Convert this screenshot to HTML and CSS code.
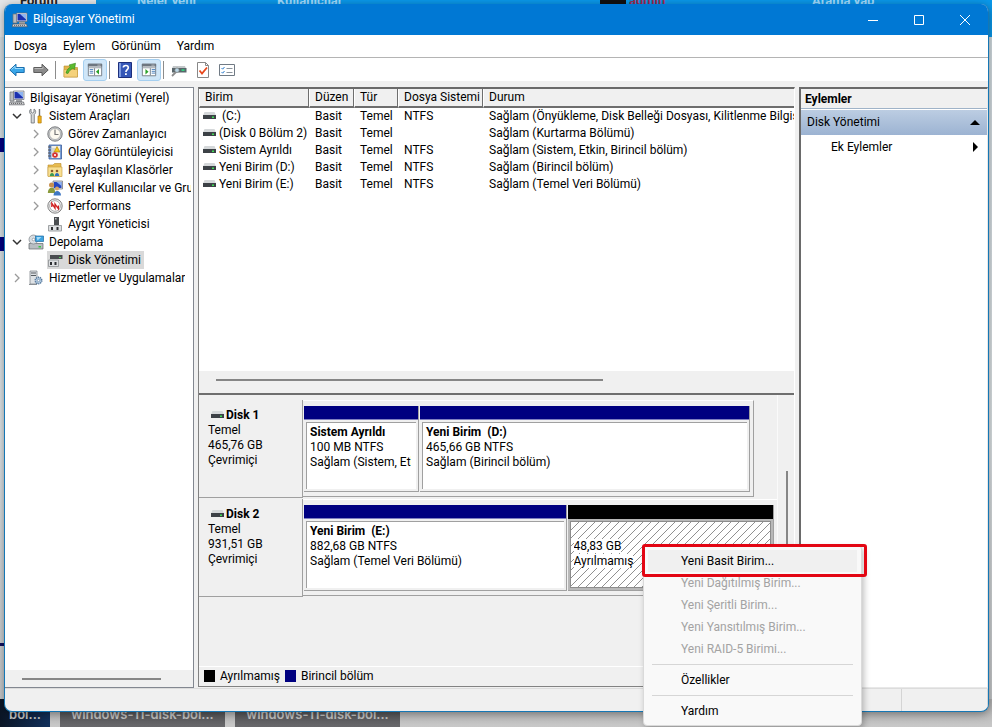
FILE: index.html
```html
<!DOCTYPE html>
<html lang="tr">
<head>
  <meta charset="utf-8">
  <title>Bilgisayar Yönetimi</title>
  <meta name="viewport" content="width=device-width, initial-scale=1">
  <link rel="stylesheet" href="styles.css">
</head>
<body>

<!-- icon sprite -->
<svg class="sprite" aria-hidden="true">
  <symbol id="i-computer" viewBox="0 0 16 16">
    <path d="M1 2h4v9H1z" fill="#b9bcc0" stroke="#6f7377" stroke-width=".7"/>
    <path d="M4.500 1h10.500v8.500H4.500z" fill="#e4e6ea" stroke="#6b6f78" stroke-width=".7"/>
    <path d="M5.500 2h8.500v6.500H5.500z" fill="#1a2fb0"/>
    <path d="M8 2h6v5.500z" fill="#8fb4f0"/>
    <path d="M7 10h6v2H7z" fill="#9da0a4"/>
    <path d="M1 12h13.500l.8 2.800H0z" fill="#d8d9db" stroke="#55585c" stroke-width=".7"/>
    <path d="M2 13.400h11" stroke="#444" stroke-width=".8" stroke-dasharray="1.200 .8"/>
  </symbol>
  <symbol id="i-back" viewBox="0 0 16 14">
    <path d="M.8 7 7 1.200V4.500h8.200v5H7v3.300z" fill="#3aa6e8" stroke="#1c6fae" stroke-width="1"/>
    <path d="M2.500 6.500 6 3.300v2.200h8" fill="none" stroke="#9bdcff"/>
  </symbol>
  <symbol id="i-forward" viewBox="0 0 16 14">
    <path d="M15.200 7 9 1.200V4.500H.8v5H9v3.300z" fill="#8b8b8b" stroke="#5c5c5c" stroke-width="1"/>
    <path d="M1.500 5.500H10V3.500" fill="none" stroke="#b9b9b9"/>
  </symbol>
  <symbol id="i-up" viewBox="0 0 16 16">
    <path d="M1 4h5l1.500 1.500H14.500V15H1z" fill="#e2b54c" stroke="#b98a2a" stroke-width=".6"/>
    <path d="M1 7.500h13.500V15H1z" fill="#f5d27c" stroke="#c79a3a" stroke-width=".6"/>
    <path d="M3 11C3.500 8 5.500 6 7.500 5L6 3l6.500-1.800L11.500 7.500 9.900 6.200C8 7.200 6 9 5 11.500z" fill="#5dbb2f" stroke="#2f8a1a" stroke-width=".6"/>
  </symbol>
  <symbol id="i-tree" viewBox="0 0 18 16">
    <path d="M1.500 1.500h15v13h-15z" fill="#fff" stroke="#6d7680"/>
    <path d="M1 1h16v3H1z" fill="#6d7680"/>
    <path d="M12 2.500h1M14 2.500h1" stroke="#fff"/>
    <path d="M2 5.500h14" stroke="#8a939c"/>
    <path d="M8.500 6v8" stroke="#6d7680"/>
    <path d="M3 7.500h4M3 9.500h4M3 11.500h4" stroke="#3f79b8"/>
    <path d="M13.500 7v6L10 10z" fill="#2ba12b"/>
  </symbol>
  <symbol id="i-pane" viewBox="0 0 18 16">
    <path d="M1.500 1.500h15v13h-15z" fill="#fff" stroke="#6d7680"/>
    <path d="M1 1h16v3H1z" fill="#6d7680"/>
    <path d="M12 2.500h1M14 2.500h1" stroke="#fff"/>
    <path d="M2 5.500h14" stroke="#8a939c"/>
    <path d="M10.500 6v8" stroke="#6d7680"/>
    <path d="M12 7.500h4M12 9.500h4M12 11.500h4" stroke="#3f79b8"/>
    <path d="M5 7v6L8.500 10z" fill="#2ba12b"/>
  </symbol>
  <symbol id="i-help" viewBox="0 0 14 16">
    <path d="M.5.5h13v15H.5z" fill="#3557b8" stroke="#1d2f7c"/>
    <path d="M1 1h2v14H1z" fill="#7d9ae0"/>
    <path d="M5.300 5.500C5.300 2.800 10.300 2.800 10.300 5.700 10.300 7.600 7.900 7.700 7.900 10" fill="none" stroke="#fff" stroke-width="1.600"/>
    <path d="M7 11.300h1.800V13H7z" fill="#fff"/>
  </symbol>
  <symbol id="i-rescan" viewBox="0 0 16 14">
    <path d="M2 3h12l1 2.500H1z" fill="#c3c7c9"/>
    <path d="M1 5h14.500v4.500H1z" fill="#59666b"/>
    <path d="M10.500 6.200h3v1.800h-3z" fill="#35d080"/>
    <path d="M1 13l4.500-4.500" stroke="#8c8c8c" stroke-width="1.800"/>
    <circle cx="6" cy="7.200" r="2.200" fill="#b9d6e6" stroke="#777" stroke-width=".6"/>
  </symbol>
  <symbol id="i-check" viewBox="0 0 14 16">
    <path d="M1.500.5h8l3 3v12h-11z" fill="#fff" stroke="#888"/>
    <path d="M9.500.5v3h3" fill="none" stroke="#888"/>
    <path d="M3.500 8.500 6 11.500 11 5.500" fill="none" stroke="#e8481c" stroke-width="1.800"/>
  </symbol>
  <symbol id="i-list" viewBox="0 0 16 14">
    <path d="M.5 1.500h15v11H.5z" fill="#fff" stroke="#707a84"/>
    <path d="M1 1.500h14" stroke="#707a84"/>
    <path d="M2.500 5 3.700 6.200 5.500 4M2.500 9 3.700 10.200 5.500 8" fill="none" stroke="#2f7fd0"/>
    <path d="M7.500 5.500h6M7.500 9.500h6" stroke="#8a939c"/>
  </symbol>
  <symbol id="i-tools" viewBox="0 0 16 16">
    <path d="M3 1v3l1.500 1L6 4V1c2 1 2.300 4 .3 5.500V15H3.200V6.500C.8 5 1.200 2 3 1z" fill="#d5d8da" stroke="#6b6f73" stroke-width=".8"/>
    <path d="M11.500 1v7" stroke="#777" stroke-width="1.400"/>
    <path d="M10 8h3.200v7H10z" fill="#f2b21c" stroke="#b37c08" stroke-width=".7"/>
  </symbol>
  <symbol id="i-clock" viewBox="0 0 16 16">
    <circle cx="8" cy="8" r="7.200" fill="#c9cbce" stroke="#6d6f72" stroke-width=".9"/>
    <circle cx="8" cy="8" r="5.500" fill="#fdfaf0" stroke="#96989b" stroke-width=".6"/>
    <path d="M8 3.500V8.500h3.500" fill="none" stroke="#777" stroke-width="1.200"/>
  </symbol>
  <symbol id="i-event" viewBox="0 0 16 16">
    <path d="M2 1h12.500v14H2z" fill="#7aa0d8" stroke="#3b5d9c" stroke-width=".8"/>
    <path d="M4.500 2h8.500v12H4.500z" fill="#f3efe4"/>
    <path d="M5 5h3M5 7h2M5 9h2" stroke="#9aa" stroke-width=".7"/>
    <path d="M1 3h3M1 6h3M1 9h3M1 12h3" stroke="#555"/>
    <path d="M10 2.500 13 8H7z" fill="#f7c51e" stroke="#a67d00" stroke-width=".6"/>
    <circle cx="8" cy="11" r="2.800" fill="#d42d2d"/>
    <path d="M6.900 9.900l2.200 2.200M9.100 9.900l-2.200 2.200" stroke="#fff" stroke-width=".8"/>
  </symbol>
  <symbol id="i-shared" viewBox="0 0 16 16">
    <path d="M1 3h5l1.500-1.500H14V14H1z" fill="#e8bc50" stroke="#b88a2a" stroke-width=".6"/>
    <path d="M1 5h14v9.500H1z" fill="#f8df92" stroke="#c79a3a" stroke-width=".6"/>
    <circle cx="5" cy="9" r="1.300" fill="#8a5a2b"/><path d="M2.800 14c0-4 4.400-4 4.400 0z" fill="#3d9a52"/>
    <circle cx="10" cy="9" r="1.300" fill="#8a5a2b"/><path d="M7.800 14c0-4 4.400-4 4.400 0z" fill="#2f6fc0"/>
  </symbol>
  <symbol id="i-users" viewBox="0 0 16 16">
    <path d="M6 1h9.500v8H6z" fill="#d8dbe0" stroke="#6b6f78" stroke-width=".7"/>
    <path d="M7 2h7.500v6H7z" fill="#2446c0"/>
    <path d="M9.500 2h5v4z" fill="#8fb4f0"/>
    <circle cx="4.500" cy="5" r="2.500" fill="#c98f4e"/><path d="M.8 13c0-7 7.500-7 7.500 0z" fill="#8a9a3b"/>
    <circle cx="10" cy="8.500" r="2" fill="#d9a566"/><path d="M6.500 15.500c0-6 7.500-6 7.500 0z" fill="#3f78c4"/>
  </symbol>
  <symbol id="i-perf" viewBox="0 0 16 16">
    <circle cx="8" cy="8" r="7.200" fill="#ececec" stroke="#777" stroke-width=".9"/>
    <circle cx="8" cy="8" r="5.300" fill="#fff" stroke="#8d8d8d" stroke-width=".7"/>
    <path d="M4.800 9V5.200L8 10.200V6l3.400 4.800V7.500" fill="none" stroke="#cf1f1f" stroke-width="1.300"/>
  </symbol>
  <symbol id="i-device" viewBox="0 0 16 16">
    <path d="M7 1h5v8H7z" fill="#4a4d50"/>
    <path d="M8 2h1.500v1.500H8z" fill="#c2c5c8"/>
    <path d="M1.500 9.500h13v5.500h-13z" fill="#dddfe1" stroke="#8c8f92" stroke-width=".8"/>
    <path d="M4 11h2v3H4zM9.500 11h2v3h-2z" fill="#2b2d30"/>
  </symbol>
  <symbol id="i-storage" viewBox="0 0 16 16">
    <path d="M1 9.500h14V15H1z" fill="#b9bec2" stroke="#63686c" stroke-width=".7"/>
    <path d="M10.500 12h2.500v1.500h-2.500z" fill="#35c943"/>
    <circle cx="5.500" cy="5.500" r="4.500" fill="#d9dee2" stroke="#7c8388" stroke-width=".7"/>
    <circle cx="5.500" cy="5.500" r="1.300" fill="#fff" stroke="#7c8388" stroke-width=".6"/>
    <path d="M7.500 2h8v5.500h-8z" fill="#3da3e0" stroke="#1f6ca3" stroke-width=".7"/>
    <path d="M8.500 3h5l-4 3.500z" fill="#a7dcf8"/>
  </symbol>
  <symbol id="i-disk" viewBox="0 0 16 16">
    <path d="M3 3h12.500v4H3z" fill="#4a4d50"/>
    <path d="M12 5h2v1h-2z" fill="#58d05e"/>
    <path d="M1.500 8h10v6.500h-10z" fill="#dddfe1" stroke="#8c8f92" stroke-width=".8"/>
    <path d="M3 10h2v3H3zM7.500 10h2v3h-2z" fill="#2b2d30"/>
  </symbol>
  <symbol id="i-services" viewBox="0 0 16 16">
    <path d="M2 1h7v13H2z" fill="#dfe2e5" stroke="#777c81" stroke-width=".7"/>
    <path d="M3 3h5M3 5.500h5" stroke="#565b60"/>
    <path d="M1 14.500h8" stroke="#8b9095"/>
    <circle cx="10.500" cy="10.500" r="3.200" fill="#b9d0e6" stroke="#55779a" stroke-width="1.600" stroke-dasharray="1.200 .8"/>
    <circle cx="10.500" cy="10.500" r="1.200" fill="#fff" stroke="#55779a" stroke-width=".6"/>
  </symbol>
  <symbol id="i-drive" viewBox="0 0 13 8">
    <path d="M1.500 0h10L13 3.500H0z" fill="#d5d8da"/>
    <path d="M0 3h13v4H0z" fill="#3c4146"/>
    <path d="M9 4.500h2V6H9z" fill="#3fdc55"/>
  </symbol>
  <symbol id="i-open" viewBox="0 0 10 10">
    <path d="M1 3l4 4 4-4" fill="none" stroke="#333" stroke-width="1.500"/>
  </symbol>
  <symbol id="i-closed" viewBox="0 0 10 10">
    <path d="M3 1l4 4-4 4" fill="none" stroke="#9a9a9a" stroke-width="1.300"/>
  </symbol>
</svg>

<!-- what is open behind the window -->
<div class="backdrop" aria-hidden="true">
  <div class="back-top">
    <span class="back-tab">Forum</span>
    <span class="back-new">Neler yeni</span>
    <span class="back-users">Kullanıcılar</span>
    <span class="back-avatar"></span>
    <span class="back-admin">admin</span>
    <span class="back-search">Arama yap</span>
  </div>
  <div class="back-left"></div>
  <div class="back-bottom">
    <span class="thumb thumb-first">böl...</span>
    <span class="thumb">windows-11-disk-böl...</span>
    <span class="thumb">windows-11-disk-böl...</span>
  </div>
</div>

<main class="window">
  <header class="titlebar">
    <svg class="icon"><use href="#i-computer"/></svg>
    <h1 class="title">Bilgisayar Yönetimi</h1>
    <button class="caption-btn" aria-label="Simge durumuna küçült"><svg viewBox="0 0 10 10"><path d="M0 5.500h10"/></svg></button>
    <button class="caption-btn" aria-label="Ekranı kapla"><svg viewBox="0 0 10 10"><path d="M.5.5h9v9h-9z"/></svg></button>
    <button class="caption-btn" aria-label="Kapat"><svg viewBox="0 0 10 10"><path d="M0 0l10 10M10 0L0 10"/></svg></button>
  </header>

  <nav class="menubar">
    <button>Dosya</button>
    <button>Eylem</button>
    <button>Görünüm</button>
    <button>Yardım</button>
  </nav>

  <div class="toolbar">
    <button class="tool" aria-label="Geri"><svg class="icon"><use href="#i-back"/></svg></button>
    <button class="tool" aria-label="İleri"><svg class="icon"><use href="#i-forward"/></svg></button>
    <span class="divider"></span>
    <button class="tool" aria-label="Yukarı"><svg class="icon"><use href="#i-up"/></svg></button>
    <button class="tool active" aria-label="Konsol ağacı"><svg class="icon"><use href="#i-tree"/></svg></button>
    <span class="divider"></span>
    <button class="tool" aria-label="Yardım"><svg class="icon"><use href="#i-help"/></svg></button>
    <button class="tool active" aria-label="Eylem bölmesi"><svg class="icon"><use href="#i-pane"/></svg></button>
    <span class="divider"></span>
    <button class="tool" aria-label="Diskleri yeniden tara"><svg class="icon"><use href="#i-rescan"/></svg></button>
    <button class="tool" aria-label="Özellikler"><svg class="icon"><use href="#i-check"/></svg></button>
    <button class="tool" aria-label="Liste"><svg class="icon"><use href="#i-list"/></svg></button>
  </div>

  <div class="panes">
    <aside class="tree-pane">
      <div class="tree-scroll">
        <div class="node"><svg class="icon"><use href="#i-computer"/></svg><span class="label">Bilgisayar Yönetimi (Yerel)</span></div>
        <ul class="tree">
          <li>
            <div class="node"><button class="toggle" aria-label="Daralt"><svg><use href="#i-open"/></svg></button><svg class="icon"><use href="#i-tools"/></svg><span class="label">Sistem Araçları</span></div>
            <ul>
              <li class="node"><button class="toggle" aria-label="Genişlet"><svg><use href="#i-closed"/></svg></button><svg class="icon"><use href="#i-clock"/></svg><span class="label">Görev Zamanlayıcı</span></li>
              <li class="node"><button class="toggle" aria-label="Genişlet"><svg><use href="#i-closed"/></svg></button><svg class="icon"><use href="#i-event"/></svg><span class="label">Olay Görüntüleyicisi</span></li>
              <li class="node"><button class="toggle" aria-label="Genişlet"><svg><use href="#i-closed"/></svg></button><svg class="icon"><use href="#i-shared"/></svg><span class="label">Paylaşılan Klasörler</span></li>
              <li class="node"><button class="toggle" aria-label="Genişlet"><svg><use href="#i-closed"/></svg></button><svg class="icon"><use href="#i-users"/></svg><span class="label">Yerel Kullanıcılar ve Gruplar</span></li>
              <li class="node"><button class="toggle" aria-label="Genişlet"><svg><use href="#i-closed"/></svg></button><svg class="icon"><use href="#i-perf"/></svg><span class="label">Performans</span></li>
              <li class="node"><span class="toggle"></span><svg class="icon"><use href="#i-device"/></svg><span class="label">Aygıt Yöneticisi</span></li>
            </ul>
          </li>
          <li>
            <div class="node"><button class="toggle" aria-label="Daralt"><svg><use href="#i-open"/></svg></button><svg class="icon"><use href="#i-storage"/></svg><span class="label">Depolama</span></div>
            <ul>
              <li class="node"><span class="toggle"></span><span class="selected"><svg class="icon"><use href="#i-disk"/></svg><span class="label">Disk Yönetimi</span></span></li>
            </ul>
          </li>
          <li class="node"><button class="toggle" aria-label="Genişlet"><svg><use href="#i-closed"/></svg></button><svg class="icon"><use href="#i-services"/></svg><span class="label">Hizmetler ve Uygulamalar</span></li>
        </ul>
      </div>
      <div class="hscroll"><span class="thumb-h"></span></div>
    </aside>

    <section class="center">
      <div class="volumes">
        <div class="volume-list">
          <table>
            <colgroup><col class="c-name"><col class="c-layout"><col class="c-type"><col class="c-fs"><col></colgroup>
            <thead>
              <tr><th>Birim</th><th>Düzen</th><th>Tür</th><th>Dosya Sistemi</th><th>Durum</th></tr>
            </thead>
            <tbody>
              <tr><td><svg class="drive"><use href="#i-drive"/></svg>&nbsp;(C:)</td><td>Basit</td><td>Temel</td><td>NTFS</td><td>Sağlam (Önyükleme, Disk Belleği Dosyası, Kilitlenme Bilgisi)</td></tr>
              <tr><td><svg class="drive"><use href="#i-drive"/></svg>(Disk 0 Bölüm 2)</td><td>Basit</td><td>Temel</td><td></td><td>Sağlam (Kurtarma Bölümü)</td></tr>
              <tr><td><svg class="drive"><use href="#i-drive"/></svg>Sistem Ayrıldı</td><td>Basit</td><td>Temel</td><td>NTFS</td><td>Sağlam (Sistem, Etkin, Birincil bölüm)</td></tr>
              <tr><td><svg class="drive"><use href="#i-drive"/></svg>Yeni Birim (D:)</td><td>Basit</td><td>Temel</td><td>NTFS</td><td>Sağlam (Birincil bölüm)</td></tr>
              <tr><td><svg class="drive"><use href="#i-drive"/></svg>Yeni Birim (E:)</td><td>Basit</td><td>Temel</td><td>NTFS</td><td>Sağlam (Temel Veri Bölümü)</td></tr>
            </tbody>
          </table>
        </div>
        <div class="hscroll"><span class="thumb-h"></span></div>
      </div>

      <div class="graph">
        <div class="disks">
          <div class="disk">
            <div class="disk-info">
              <h2><svg class="drive"><use href="#i-drive"/></svg>Disk 1</h2>
              <p>Temel</p><p>465,76 GB</p><p>Çevrimiçi</p>
            </div>
            <div class="parts parts-short">
              <div class="part" style="flex-grow: 26">
                <div class="bar"></div>
                <div class="box"><h3>Sistem Ayrıldı</h3><p>100 MB NTFS</p><p>Sağlam (Sistem, Etkin, Birincil bölüm)</p></div>
              </div>
              <div class="part" style="flex-grow: 75">
                <div class="bar"></div>
                <div class="box"><h3>Yeni Birim &nbsp;(D:)</h3><p>465,66 GB NTFS</p><p>Sağlam (Birincil bölüm)</p></div>
              </div>
            </div>
          </div>
          <div class="disk">
            <div class="disk-info">
              <h2><svg class="drive"><use href="#i-drive"/></svg>Disk 2</h2>
              <p>Temel</p><p>931,51 GB</p><p>Çevrimiçi</p>
            </div>
            <div class="parts">
              <div class="part" style="flex-grow: 56">
                <div class="bar"></div>
                <div class="box"><h3>Yeni Birim &nbsp;(E:)</h3><p>882,68 GB NTFS</p><p>Sağlam (Temel Veri Bölümü)</p></div>
              </div>
              <div class="part free" style="flex-grow: 44">
                <div class="bar"></div>
                <div class="box"><p>&nbsp;</p><p><span>48,83 GB</span></p><p><span>Ayrılmamış</span></p></div>
              </div>
            </div>
          </div>
        </div>
        <div class="vscroll"><span class="thumb-v"></span></div>
      </div>

      <div class="legend">
        <span class="swatch"></span>Ayrılmamış
        <span class="swatch primary"></span>Birincil bölüm
      </div>
    </section>

    <aside class="actions">
      <h2 class="actions-title">Eylemler</h2>
      <button class="actions-group">Disk Yönetimi <svg viewBox="0 0 10 10"><path d="M5 2l5 5H0z"/></svg></button>
      <button class="actions-item">Ek Eylemler <svg viewBox="0 0 10 10"><path d="M3 0l5 5-5 5z"/></svg></button>
    </aside>
  </div>

  <footer class="statusbar"><span></span><span></span><span></span></footer>
</main>

<div class="context-menu" role="menu">
  <button class="item hover" role="menuitem">Yeni Basit Birim...</button>
  <button class="item" role="menuitem" disabled>Yeni Dağıtılmış Birim...</button>
  <button class="item" role="menuitem" disabled>Yeni Şeritli Birim...</button>
  <button class="item" role="menuitem" disabled>Yeni Yansıtılmış Birim...</button>
  <button class="item" role="menuitem" disabled>Yeni RAID-5 Birimi...</button>
  <hr>
  <button class="item" role="menuitem">Özellikler</button>
  <hr>
  <button class="item" role="menuitem">Yardım</button>
  <div class="marker"></div>
</div>

</body>
</html>
```
FILE: styles.css
```css
* {
  box-sizing: border-box;
}

body {
  margin: 0;
  height: 100vh;
  padding: 4px 3px 15px 4px;
  display: flex;
  position: relative;
  overflow: hidden;
  background: #c6c8ca;
  font-family: Roboto, "Noto Sans", sans-serif;
  font-size: 12px;
  line-height: 15px;
  color: #000;
}

h1, h2, h3, p, ul {
  margin: 0;
  padding: 0;
  font-size: 12px;
  font-weight: normal;
}

ul {
  list-style: none;
}

button {
  padding: 0;
  border: 0;
  background: none;
  font: inherit;
  color: inherit;
  text-align: left;
}

.sprite {
  position: absolute;
  width: 0;
  height: 0;
}

.icon {
  width: 16px;
  height: 16px;
  flex: none;
}

.drive {
  width: 13px;
  height: 8px;
  margin-right: 3px;
}

/* Things behind the window */
.backdrop {
  position: absolute;
  inset: 0;
  display: flex;
  flex-direction: column;
  overflow: hidden;
  background: linear-gradient(#0a98ea 37px, #d3dde2 37px, #dfe5e8 60%, #c4c6c8);
}

.back-top {
  height: 37px;
  display: flex;
  align-items: flex-start;
  font-size: 13px;
  font-weight: bold;
  line-height: 1px;
  color: #9fdcff;
}

.back-tab {
  width: 96px;
  height: 37px;
  padding-left: 20px;
  background: #e3e6e8;
  color: #222;
}

.back-new {
  width: 140px;
  padding-left: 41px;
}

.back-users {
  width: 364px;
  padding-left: 41px;
}

.back-avatar {
  width: 26px;
  height: 4px;
  background: #111;
}

.back-admin {
  width: 186px;
  padding-left: 3px;
  color: #a02a50;
}

.back-left {
  flex: 1;
  width: 5px;
  background: linear-gradient(transparent 101px, #000080 101px 115px, transparent 115px 200px, #000080 200px 214px, transparent 214px 606px, #101060 606px 609px, transparent 609px);
}

.back-bottom {
  height: 28px;
  display: flex;
  gap: 10px;
  background: linear-gradient(#b2b2b2, #c8c8c8);
}

.thumb {
  width: 165px;
  padding-top: 8px;
  background: linear-gradient(#4a4a4c, #68686b);
  color: #c6c6c6;
  font-family: Inter, sans-serif;
  font-size: 13px;
  font-weight: 600;
  text-align: center;
}

.thumb-first {
  width: 50px;
  background: linear-gradient(90deg, #0b1626, #12305c);
}

/* Window frame */
.window {
  flex: 1;
  min-width: 0;
  display: flex;
  flex-direction: column;
  position: relative;
  overflow: hidden;
  border: 1px solid #1577b5;
  border-top: 0;
  border-radius: 8px;
  background: #f0f0f0;
  box-shadow: 0 2px 10px rgba(0, 0, 0, 0.4);
}

.titlebar {
  height: 31px;
  display: flex;
  align-items: center;
  padding-left: 7px;
  background: #0078d4;
  color: #fff;
}

.title {
  flex: 1;
  margin-left: 5px;
}

.caption-btn {
  width: 46px;
  height: 31px;
  display: flex;
  align-items: center;
  justify-content: center;
}

.caption-btn svg {
  width: 10px;
  height: 10px;
  fill: none;
  stroke: #fff;
}

.menubar {
  height: 23px;
  display: flex;
  align-items: center;
  gap: 16px;
  padding-left: 9px;
  border-bottom: 1px solid #b4b4b4;
  background: #fff;
}

.toolbar {
  height: 23px;
  display: flex;
  align-items: center;
  background: #fff;
}

.tool {
  width: 24px;
  height: 22px;
  display: flex;
  align-items: center;
  justify-content: center;
  border-radius: 3px;
}

.tool.active {
  background: #cfe6f8;
  border: 1px solid #a5cff0;
}

.divider {
  width: 1px;
  height: 18px;
  margin: 0 3px 0 2px;
  background: #8c8c8c;
}

/* Panes */
.panes {
  flex: 1;
  min-height: 0;
  display: grid;
  grid-template-columns: 189px minmax(0, 1fr) 189px;
  gap: 4px;
  margin-top: 6px;
}

.tree-pane {
  display: flex;
  flex-direction: column;
  border: 1px solid #828790;
  border-left: 0;
  background: #fff;
  overflow: hidden;
}

.tree-scroll {
  flex: 1;
  padding: 1px 2px 0 4px;
  overflow: hidden;
}

.tree ul {
  padding-left: 19px;
}

.node {
  height: 18px;
  display: flex;
  align-items: center;
  white-space: nowrap;
}

.toggle {
  width: 16px;
  height: 16px;
  margin-right: 3px;
  flex: none;
  display: flex;
  align-items: center;
  justify-content: center;
}

.toggle svg {
  width: 10px;
  height: 10px;
}

.label {
  margin-left: 5px;
}

.tree-scroll .label {
  overflow: hidden;
}

.selected {
  display: flex;
  align-items: center;
  height: 18px;
  padding-right: 3px;
  background: #d9d9d9;
}

.hscroll {
  height: 17px;
  flex: none;
  display: flex;
  align-items: center;
  padding: 0 17px;
  background: #f0f0f0;
}

.thumb-h {
  width: 69%;
  height: 2px;
  background: #868686;
}

.tree-pane .thumb-h {
  width: 90%;
}

.center {
  display: flex;
  flex-direction: column;
  margin-bottom: 1px;
  border: 1px solid #828282;
  border-top: 2px solid #6a6a6a;
  border-right-color: #fff;
}

.volumes {
  height: 306px;
  display: flex;
  flex-direction: column;
  padding-bottom: 5px;
  border-bottom: 2px solid #6e6e6e;
}

.volume-list {
  flex: 1;
  overflow: hidden;
  background: #fff;
}

table {
  width: 100%;
  table-layout: fixed;
  border-collapse: separate;
  border-spacing: 0;
}

.c-name {
  width: 110px;
}

.c-layout {
  width: 45px;
}

.c-type {
  width: 44px;
}

.c-fs {
  width: 85px;
}

th, td {
  height: 17px;
  padding: 0 0 0 6px;
  overflow: hidden;
  white-space: nowrap;
  text-align: left;
  font-weight: normal;
}

th {
  height: 19px;
  background: #f0f0f0;
  border-right: 1px solid #6e6e6e;
  border-bottom: 2px solid #6e6e6e;
  border-left: 1px solid #fff;
  padding-left: 5px;
}

th:last-child {
  border-right: 0;
}

td:first-child {
  padding-left: 4px;
}

/* Disk graph */
.graph {
  flex: 1;
  min-height: 0;
  display: flex;
  background: #f0f0f0;
}

.disks {
  flex: 1;
  min-width: 0;
  padding-top: 5px;
}

.disk {
  height: 99px;
  display: flex;
  align-items: flex-start;
}

.disk-info {
  width: 104px;
  height: 98px;
  padding: 8px 0 0 9px;
  border-right: 1px solid #a0a0a0;
  border-bottom: 1px solid #a0a0a0;
}

.disk-info h2 {
  padding-left: 3px;
  font-weight: bold;
}

.disk-info .drive {
  margin-right: 2px;
}

.parts {
  flex: 1;
  min-width: 0;
  height: 97px;
  display: flex;
  gap: 1px;
  padding: 5px 3px 4px 1px;
  border-top: 1px solid #fff;
  border-bottom: 1px solid #a0a0a0;
}

.parts-short {
  flex: 0 1 451px;
  border-right: 1px solid #a0a0a0;
}

.part {
  flex: 1 1 0;
  min-width: 0;
  display: flex;
  flex-direction: column;
  border: 1px solid #a0a0a0;
  border-top: 0;
  border-left: 0;
}

.bar {
  height: 14px;
  background: #000080;
  border-bottom: 1px solid #8080c0;
}

.box {
  flex: 1;
  margin: 2px;
  padding: 2px 5px 2px 3px;
  white-space: nowrap;
  border: 1px solid #a0a0a0;
  border-right: 0;
  border-bottom: 0;
  background: #fff;
}

.box h3 {
  font-weight: bold;
}

.box p {
  overflow: hidden;
}

.free {
  background: #b8b8b8;
}

.free .bar {
  background: #000;
  border-color: #000;
}

.free .box {
  border: 1px solid #8c8c8c;
  background: #fff linear-gradient(135deg, transparent 47%, #909090 47%, #909090 53%, transparent 53%) 0 0 / 8px 8px;
}

.free .box span {
  background: #fff;
}

.vscroll {
  width: 17px;
  padding-left: 8px;
  border-left: 1px solid #fafafa;
}

.thumb-v {
  display: block;
  width: 2px;
  height: 115px;
  margin-top: 76px;
  background: #868686;
}

.legend {
  height: 20px;
  display: flex;
  align-items: center;
  padding: 0 0 1px 5px;
  border-top: 1px solid #fff;
}

.swatch {
  width: 11px;
  height: 12px;
  margin-right: 5px;
  background: #000;
}

.primary {
  margin-left: 5px;
  background: #000080;
}

/* Actions pane */
.actions {
  border: 1px solid #828282;
  border-top: 2px solid #6a6a6a;
  border-left: 2px solid #6a6a6a;
  border-right-color: #e8e8e8;
  border-bottom-color: #e8e8e8;
  background: #fff;
}

.actions-title {
  height: 20px;
  padding: 3px 0 0 4px;
  background: #f0f0f0;
  border-bottom: 1px solid #9fb3c8;
  font-weight: bold;
}

.actions-group, .actions-item {
  width: 100%;
  height: 25px;
  display: flex;
  align-items: center;
  justify-content: space-between;
  padding: 0 7px 0 6px;
  margin-top: 1px;
  background: linear-gradient(#bccde2, #9cb3d2);
}

.actions-item {
  height: 22px;
  padding-left: 30px;
  background: none;
}

.actions svg {
  width: 10px;
  height: 10px;
}

.statusbar {
  height: 23px;
  display: flex;
  justify-content: flex-end;
  border-top: 1px solid #dcdcdc;
}

.statusbar span {
  width: 86px;
  border-right: 1px solid #d4d4d4;
}

/* Context menu */
.context-menu {
  position: absolute;
  left: 643px;
  top: 545px;
  width: 219px;
  padding: 4px 4px 3px;
  border: 1px solid #dadada;
  border-radius: 4px;
  background: #f9f9f9;
  box-shadow: 2px 3px 6px rgba(0, 0, 0, 0.25);
}

.item {
  display: block;
  width: 100%;
  height: 22px;
  padding-left: 33px;
}

.item.hover {
  background: #f0f0f0;
}

.item:disabled {
  color: #a3a3a3;
}

hr {
  height: 1px;
  margin: 4px;
  border: 0;
  background: #d6d6d6;
}

.marker {
  position: absolute;
  left: -2px;
  top: -2px;
  width: 225px;
  height: 33px;
  border: 3px solid #e30613;
  border-radius: 3px;
}
```
